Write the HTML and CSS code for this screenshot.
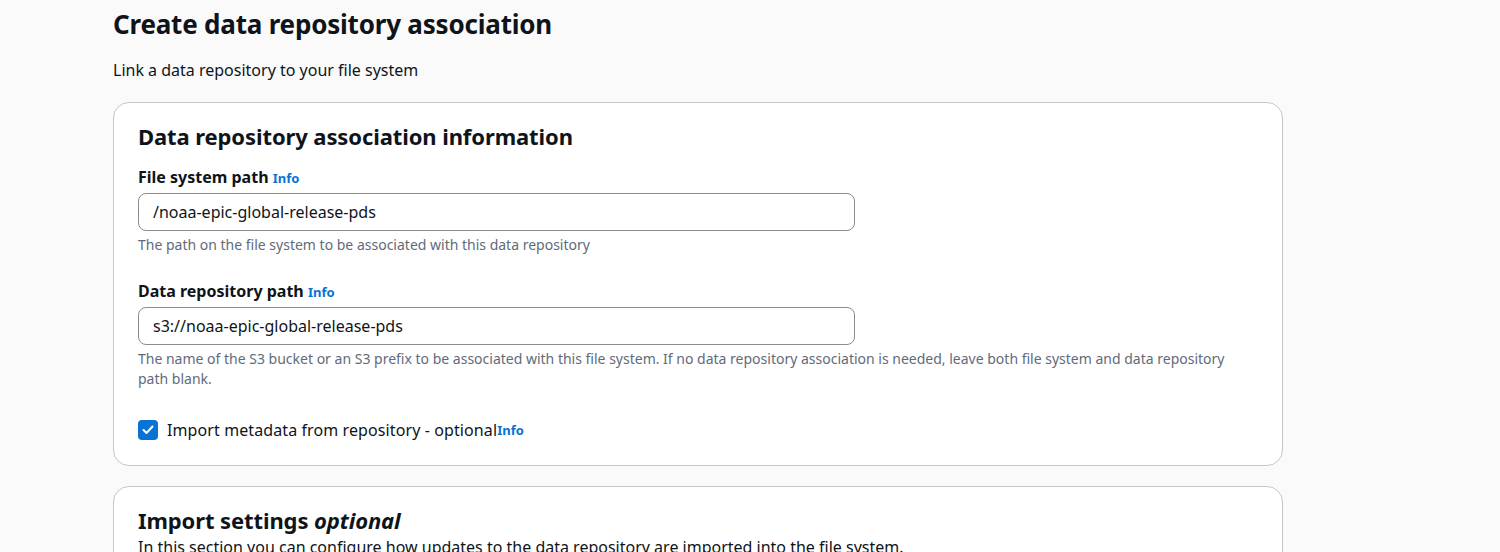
FILE: index.html
```html
<!DOCTYPE html>
<html>

<head>
    <meta charset="UTF-8">
    <title>Create data repository association</title>
    <link rel="stylesheet" href="styles.css">
</head>

<body>
<div class="page">
    <h1 class="page-title">Create data repository association</h1>
    <p class="page-desc">Link a data repository to your file system</p>

    <!-- association info -->
    <div class="card">
        <h2 class="card-title">Data repository association information</h2>

        <div class="field">
            <label class="field-label">File system path <a class="info" href="#">Info</a></label>
            <input class="text-input" type="text" value="/noaa-epic-global-release-pds">
            <p class="hint">The path on the file system to be associated with this data repository</p>
        </div>

        <div class="field">
            <label class="field-label">Data repository path <a class="info" href="#">Info</a></label>
            <input class="text-input" type="text" value="s3://noaa-epic-global-release-pds">
            <p class="hint">The name of the S3 bucket or an S3 prefix to be associated with this file system. If no data repository association is needed, leave both file system and data repository path blank.</p>
        </div>

        <div class="check-row">
            <span class="checkbox">
                <svg width="12" height="10" viewBox="0 0 12 10"><polyline points="1.5,5 4.5,8 10.5,1.5" fill="none" stroke="#fff" stroke-width="2" stroke-linecap="round" stroke-linejoin="round"/></svg>
            </span>
            <span class="check-label">Import metadata from repository - optional</span><a class="info" href="#">Info</a>
        </div>
    </div>

    <!-- import settings -->
    <div class="card">
        <h2 class="card-title">Import settings <i>optional</i></h2>
        <p class="card-desc">In this section you can configure how updates to the data repository are imported into the file system.</p>
    </div>
</div>
</body>

</html>
```

FILE: styles.css
```css
body {
    margin: 0;
    background: #fafafa;
    color: #0f141a;
    font-family: "Noto Sans", "Open Sans", sans-serif;
}

.page {
    padding: 6px 0 0 113px;
    width: 1170px;
}

.page-title {
    margin: 0;
    font-size: 26px;
    line-height: 36px;
    font-weight: 700;
    letter-spacing: -0.2px;
}

.page-desc {
    margin: 17px 0 0;
    font-size: 16px;
    line-height: 22px;
}

.card {
    margin-top: 21px;
    background: #fff;
    border: 1px solid #c6c6cd;
    border-radius: 16px;
    padding: 17px 24px 24px;
}

.card + .card {
    margin-top: 20px;
}

.card-title {
    margin: 0;
    font-size: 22px;
    line-height: 32px;
    font-weight: 700;
    letter-spacing: -0.1px;
}

.card-title i {
    font-weight: 700;
}

.card-desc {
    margin: 0;
    font-size: 16px;
    line-height: 22px;
}

.field {
    display: flex;
    flex-direction: column;
    margin-top: 14px;
}

.field + .field {
    margin-top: 25px;
}

.field-label {
    font-size: 16px;
    line-height: 22px;
    font-weight: 700;
    margin-bottom: 4px;
}

.info {
    color: #0972d3;
    font-size: 13px;
    font-weight: 700;
    text-decoration: none;
}

.text-input {
    box-sizing: border-box;
    width: 717px;
    height: 38px;
    border: 1px solid #8c8c94;
    border-radius: 8px;
    padding: 0 14px;
    font-family: inherit;
    font-size: 16px;
    color: #0f141a;
    background: #fff;
}

.hint {
    margin: 4px 0 0;
    font-size: 14px;
    line-height: 20px;
    color: #5f6b7a;
}

.check-row {
    display: flex;
    align-items: center;
    margin-top: 30px;
    height: 22px;
}

.checkbox {
    box-sizing: border-box;
    width: 20px;
    height: 20px;
    border-radius: 4px;
    background: #0972d3;
    display: flex;
    align-items: center;
    justify-content: center;
    margin-right: 9px;
}

.check-label {
    font-size: 16px;
    line-height: 22px;
    letter-spacing: 0.1px;
}
```
